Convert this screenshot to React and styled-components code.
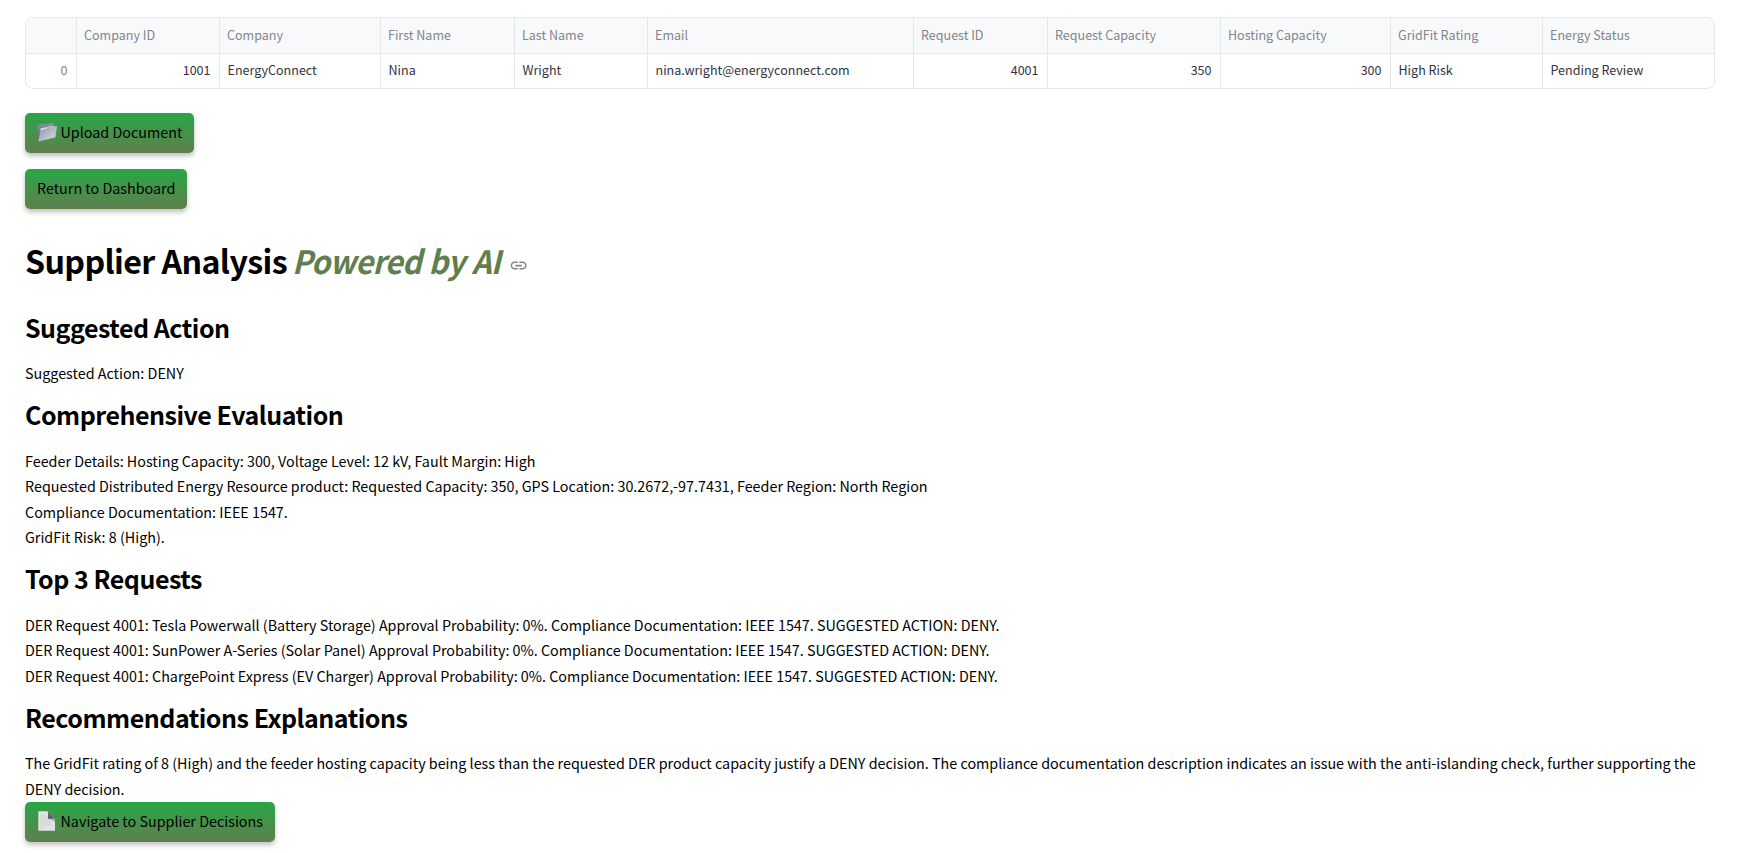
import React from "react";
import styled, { createGlobalStyle } from "styled-components";

const GlobalStyle = createGlobalStyle`
  *, *::before, *::after { box-sizing: border-box; }
  body {
    margin: 0;
    background: #fff;
    color: #000;
    font-family: "Source Sans Pro", "Noto Sans CJK SC", sans-serif;
    font-size: 14.33px;
    line-height: 25.6px;
  }
`;

const Page = styled.main`
  display: flex;
  flex-direction: column;
  align-items: flex-start;
  width: 1750px;
  height: 853px;
  overflow: hidden;
  padding: 17px 35px 0 25px;
`;

const DataGrid = styled.div`
  display: grid;
  grid-template-columns: 51px 143px 161px 134px 133px 266px 134px 173px 170px 152px 1fr;
  grid-template-rows: 36px 34px;
  width: 1690px;
  border: 1px solid #e6e7e9;
  border-radius: 8px;
  overflow: hidden;
  font-size: 12.54px;
`;

const Cell = styled.div`
  display: flex;
  align-items: center;
  justify-content: ${(p) => (p.$numeric ? "flex-end" : "flex-start")};
  padding: 0 8.5px 2px 7.5px;
  color: ${(p) => (p.$muted ? "#83848b" : "#31333f")};
  border-right: ${(p) => (p.$last ? "0" : "1px solid #e6e7e9")};
  white-space: nowrap;
`;

const HeaderCell = styled(Cell)`
  padding: 0 7px 2px;
  color: #83848b;
  background: #f8f9fb;
  border-bottom: 1px solid #e6e7e9;
`;

const Button = styled.button`
  display: flex;
  align-items: center;
  gap: 3.5px;
  height: 40px;
  margin-top: ${(p) => p.$top}px;
  padding: 0 12px 2px;
  border: 0;
  border-radius: 5px;
  background: linear-gradient(#28a745, #5f7f4e);
  box-shadow: 0 3px 5px rgba(0, 0, 0, 0.25);
  color: #000;
  font: inherit;
  white-space: nowrap;
`;

const Title = styled.h1`
  display: flex;
  align-items: flex-start;
  height: 44.5px;
  margin: 29.5px 0 0;
  font-size: 32.2px;
  line-height: 43px;
  font-weight: 700;
  letter-spacing: -0.62px;
  white-space: pre;
`;

const Accent = styled.em`
  display: inline-block;
  margin: 0 -9.8px 0 -1.5px;
  color: #5f7f4e;
  letter-spacing: -0.65px;
  word-spacing: 1px;
  transform: scaleX(0.955);
  transform-origin: left center;
`;

const LinkIcon = styled.svg`
  margin: 17px 0 0 8.3px;
`;

const Heading = styled.h2`
  height: 33.6px;
  margin: ${(p) => p.$top}px 0 16.1px;
  font-size: 25px;
  line-height: 33.6px;
  font-weight: 700;
  letter-spacing: -0.48px;
`;

const Text = styled.p`
  margin: 0;
`;

const columns = [
  "", "Company ID", "Company", "First Name", "Last Name", "Email",
  "Request ID", "Request Capacity", "Hosting Capacity", "GridFit Rating", "Energy Status",
];

const row = [
  { value: "0", numeric: true, muted: true },
  { value: "1001", numeric: true },
  { value: "EnergyConnect" },
  { value: "Nina" },
  { value: "Wright" },
  { value: "nina.wright@energyconnect.com" },
  { value: "4001", numeric: true },
  { value: "350", numeric: true },
  { value: "300", numeric: true },
  { value: "High Risk" },
  { value: "Pending Review" },
];

function FolderIcon() {
  return (
    <svg width="20" height="20" viewBox="0 0 20 20" aria-hidden="true">
      <defs>
        <linearGradient id="folderBack" x1="0" y1="0" x2="0" y2="1">
          <stop offset="0" stopColor="#8795a0" />
          <stop offset="1" stopColor="#536471" />
        </linearGradient>
        <linearGradient id="folderFront" x1="0" y1="0" x2="1" y2="1">
          <stop offset="0" stopColor="#8793a0" />
          <stop offset="1" stopColor="#dce0e5" />
        </linearGradient>
      </defs>
      <path d="M.2 3.2 6 1.5l1.5 1L16 .4l1 4L2 19 .6 17.5Z" fill="url(#folderBack)" />
      <path d="M3.5 6.4 16 3.7l.4 1.4-13 3.5Z" fill="#d7dde2" />
      <path d="M4 8.3 9 7l1.5-1.6 9.2-1.2-1.5 11.1L1.5 19.2Z" fill="url(#folderFront)" stroke="#bcc5cd" strokeWidth=".5" />
    </svg>
  );
}

function PageIcon() {
  return (
    <svg width="20" height="20" viewBox="0 0 20 20" aria-hidden="true">
      <path d="M1.3.3h9.2l7.5 7.8v11.6H1.3Z" fill="#e3e3e3" />
      <path d="M3 4h6M3 6h7M3 8h7M3 10h10M3 12h11M3 14h12M3 16.5h5" stroke="#c9caca" strokeWidth=".7" />
      <path d="M10.5 7 18 8.1v3.2Z" fill="#b5b7b7" />
      <path d="M10.5.3 18 8.1c-2-.4-4.4-.6-7.2.1.5-2.4.6-5.8-.3-7.9Z" fill="#596166" />
    </svg>
  );
}

export default function App() {
  return (
    <>
      <GlobalStyle />
      <Page>
        <DataGrid>
          {columns.map((name, i) => (
            <HeaderCell key={i} $last={i === columns.length - 1}>{name}</HeaderCell>
          ))}
          {row.map((cell, i) => (
            <Cell key={i} $numeric={cell.numeric} $muted={cell.muted} $last={i === row.length - 1}>
              {cell.value}
            </Cell>
          ))}
        </DataGrid>

        <Button $top={24}><FolderIcon />Upload Document</Button>
        <Button $top={16}>Return to Dashboard</Button>

        <Title>
          {"Supplier Analysis "}
          <Accent>Powered by AI</Accent>
          <LinkIcon width="19.2" height="19.2" viewBox="0 0 24 24" fill="#85868c" aria-hidden="true">
            <path d="M3.9 12c0-1.71 1.39-3.1 3.1-3.1h4V7H7c-2.76 0-5 2.24-5 5s2.24 5 5 5h4v-1.9H7c-1.71 0-3.1-1.39-3.1-3.1zM8 13h8v-2H8v2zm9-6h-4v1.9h4c1.71 0 3.1 1.39 3.1 3.1s-1.39 3.1-3.1 3.1h-4V17h4c2.76 0 5-2.24 5-5s-2.24-5-5-5z" />
          </LinkIcon>
        </Title>

        <Heading $top={27.7}>Suggested Action</Heading>
        <Text>Suggested Action: DENY</Text>

        <Heading $top={12}>Comprehensive Evaluation</Heading>
        <Text>Feeder Details: Hosting Capacity: 300, Voltage Level: 12 kV, Fault Margin: High</Text>
        <Text>Requested Distributed Energy Resource product: Requested Capacity: 350, GPS Location: 30.2672,-97.7431, Feeder Region: North Region</Text>
        <Text>Compliance Documentation: IEEE 1547.</Text>
        <Text>GridFit Risk: 8 (High).</Text>

        <Heading $top={12}>Top 3 Requests</Heading>
        <Text>DER Request 4001: Tesla Powerwall (Battery Storage) Approval Probability: 0%. Compliance Documentation: IEEE 1547. SUGGESTED ACTION: DENY.</Text>
        <Text>DER Request 4001: SunPower A-Series (Solar Panel) Approval Probability: 0%. Compliance Documentation: IEEE 1547. SUGGESTED ACTION: DENY.</Text>
        <Text>DER Request 4001: ChargePoint Express (EV Charger) Approval Probability: 0%. Compliance Documentation: IEEE 1547. SUGGESTED ACTION: DENY.</Text>

        <Heading $top={12}>Recommendations Explanations</Heading>
        <Text>The GridFit rating of 8 (High) and the feeder hosting capacity being less than the requested DER product capacity justify a DENY decision. The compliance documentation description indicates an issue with the anti-islanding check, further supporting the DENY decision.</Text>
        <Button $top={0.3}><PageIcon />Navigate to Supplier Decisions</Button>
      </Page>
    </>
  );
}
